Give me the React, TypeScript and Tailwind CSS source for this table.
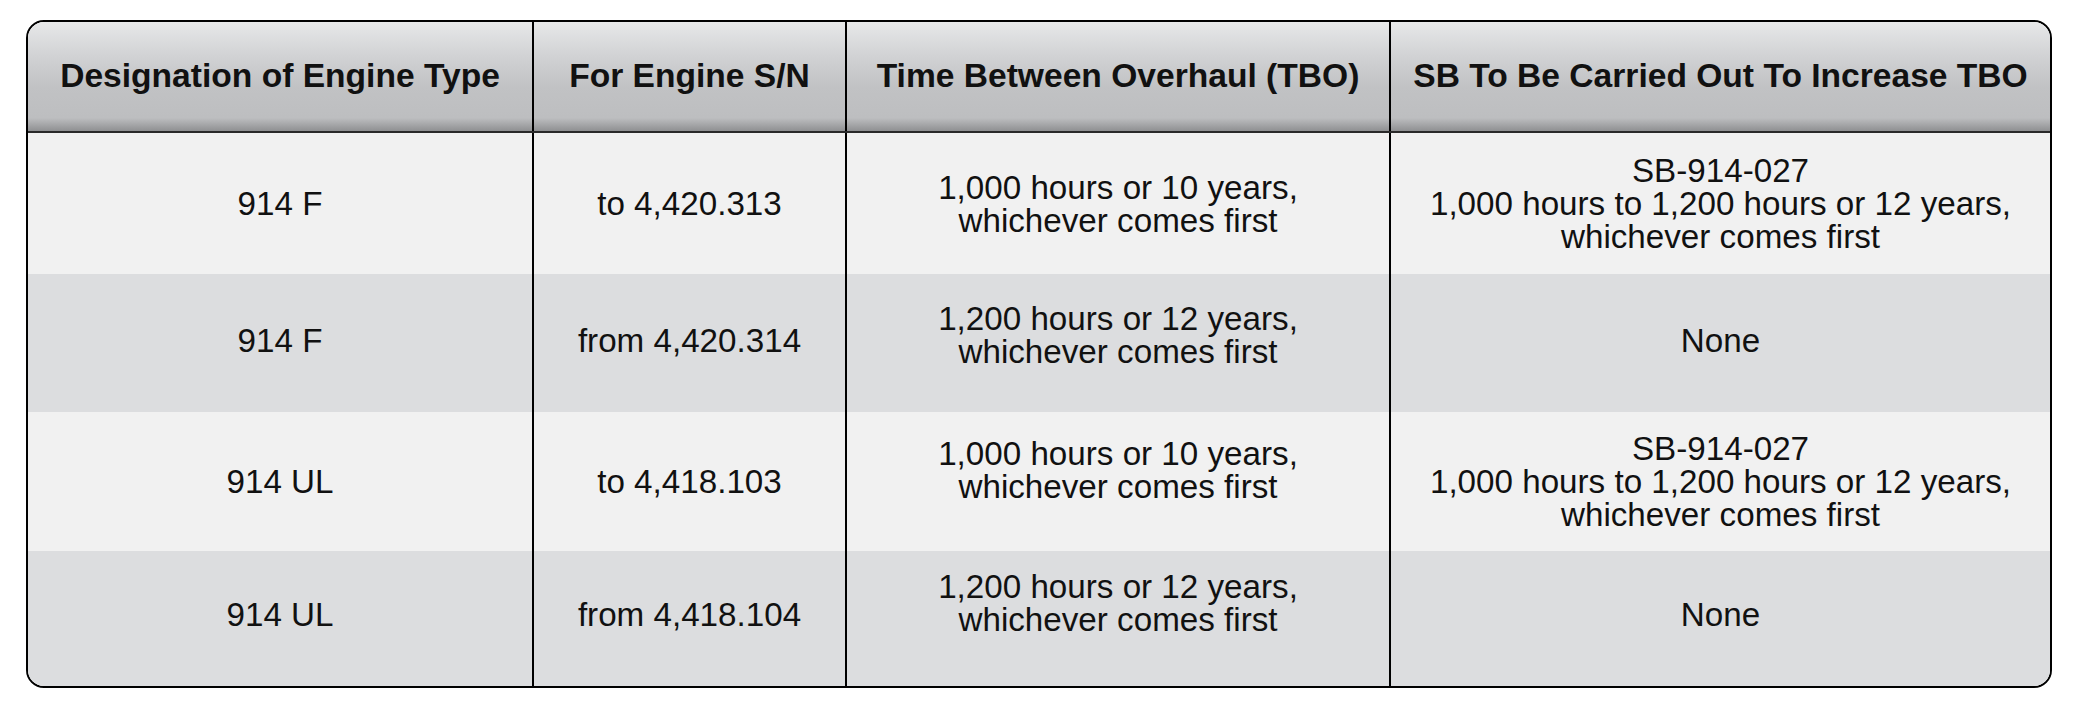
const headers = [
  'Designation of Engine Type',
  'For Engine S/N',
  'Time Between Overhaul (TBO)',
  'SB To Be Carried Out To Increase TBO',
]

// lift = extra bottom padding per cell, the source sheet sits some cells a bit high
const rows: { cells: string[][]; h: string; lift: string[] }[] = [
  {
    h: 'h-[141px]',
    lift: ['', '', '', ''],
    cells: [
      ['914 F'],
      ['to 4,420.313'],
      ['1,000 hours or 10 years,', 'whichever comes first'],
      ['SB-914-027', '1,000 hours to 1,200 hours or 12 years,', 'whichever comes first'],
    ],
  },
  {
    h: 'h-[138px]',
    lift: ['pb-[6px]', 'pb-[6px]', 'pb-[16px]', 'pb-[6px]'],
    cells: [['914 F'], ['from 4,420.314'], ['1,200 hours or 12 years,', 'whichever comes first'], ['None']],
  },
  {
    h: 'h-[139px]',
    lift: ['', '', 'pb-[24px]', ''],
    cells: [
      ['914 UL'],
      ['to 4,418.103'],
      ['1,000 hours or 10 years,', 'whichever comes first'],
      ['SB-914-027', '1,000 hours to 1,200 hours or 12 years,', 'whichever comes first'],
    ],
  },
  {
    h: 'h-[135px]',
    lift: ['pb-[8px]', 'pb-[8px]', 'pb-[32px]', 'pb-[8px]'],
    cells: [['914 UL'], ['from 4,418.104'], ['1,200 hours or 12 years,', 'whichever comes first'], ['None']],
  },
]

const cols = 'grid grid-cols-[504px_313px_544px_661px]'

export default function App() {
  return (
    <div className="min-h-[714px] bg-white pl-[26px] pt-[20px] font-['Liberation_Sans',Arial,sans-serif] text-[#111]">
      <div className="w-[2026px] overflow-hidden rounded-[18px] border-2 border-black">
        <div className={`${cols} h-[111px] border-b-2 border-[#2a2a2a] bg-[linear-gradient(to_bottom,#e7e8e9_0%,#d2d3d5_30%,#c1c2c4_60%,#bdbec0_88%,#8f9092_100%)]`}>
          {headers.map((t, i) => (
            <div
              key={t}
              className={`flex items-center justify-center text-[33.6px] font-bold ${i > 0 ? 'border-l-2 border-black' : ''}`}
            >
              {t}
            </div>
          ))}
        </div>
        {rows.map((r, ri) => (
          <div key={ri} className={`${cols} ${r.h} ${ri % 2 === 0 ? 'bg-[#f1f1f1]' : 'bg-[#dcdddf]'}`}>
            {r.cells.map((lines, ci) => (
              <div
                key={ci}
                className={`flex flex-col items-center justify-center text-center text-[33.2px] leading-[33px] ${r.lift[ci]} ${ci > 0 ? 'border-l-2 border-black' : ''}`}
              >
                {lines.map((l) => (
                  <span key={l}>{l}</span>
                ))}
              </div>
            ))}
          </div>
        ))}
      </div>
    </div>
  )
}
